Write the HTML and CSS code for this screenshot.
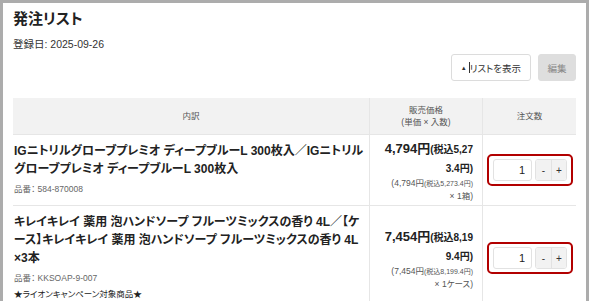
FILE: index.html
```html
<!DOCTYPE html>
<html>
<head>
    <title>発注リスト</title>
    <link rel="stylesheet" href="styles.css">
</head>
<body>
    <div class="frame">
        <h1 class="title">発注リスト</h1>
        <p class="date">登録日: 2025-09-26</p>
        <div class="actions">
            <button class="btn-list"><span class="arrow">▲</span><span class="caret"></span>リストを表示</button>
            <button class="btn-edit">編集</button>
        </div>
        <table class="order-table">
            <thead>
                <tr>
                    <th class="col-item">内訳</th>
                    <th class="col-price">販売価格<br>(単価 × 入数)</th>
                    <th class="col-qty">注文数</th>
                </tr>
            </thead>
            <tbody>
                <tr>
                    <td class="col-item">
                        <div class="item-name">IGニトリルグローブプレミオ ディープブルーL 300枚入／IGニトリルグローブプレミオ ディープブルーL 300枚入</div>
                        <div class="item-code">品番： 584-870008</div>
                    </td>
                    <td class="col-price">
                        <div class="price"><span class="price-main">4,794円</span><span class="price-tax">(税込5,273.4円)</span></div>
                        <div class="price-unit">(4,794円<span class="tiny">(税込5,273.4円)</span> <span class="nowrap">× 1箱)</span></div>
                    </td>
                    <td class="col-qty">
                        <div class="qty-box">
                            <input class="qty-input" type="text" value="1">
                            <div class="qty-buttons">
                                <button class="qty-btn">-</button>
                                <button class="qty-btn">+</button>
                            </div>
                        </div>
                    </td>
                </tr>
                <tr>
                    <td class="col-item">
                        <div class="item-name">キレイキレイ 薬用 泡ハンドソープ フルーツミックスの香り 4L／【ケース】キレイキレイ 薬用 泡ハンドソープ フルーツミックスの香り 4L<wbr>×3本</div>
                        <div class="item-code">品番： KKSOAP-9-007</div>
                        <div class="item-note">★ライオンキャンペーン対象商品★</div>
                    </td>
                    <td class="col-price">
                        <div class="price"><span class="price-main">7,454円</span><span class="price-tax">(税込8,199.4円)</span></div>
                        <div class="price-unit">(7,454円<span class="tiny">(税込8,199.4円)</span> <span class="nowrap">× 1ケース)</span></div>
                    </td>
                    <td class="col-qty">
                        <div class="qty-box">
                            <input class="qty-input" type="text" value="1">
                            <div class="qty-buttons">
                                <button class="qty-btn">-</button>
                                <button class="qty-btn">+</button>
                            </div>
                        </div>
                    </td>
                </tr>
            </tbody>
        </table>
    </div>
</body>
</html>
```

FILE: styles.css
```css
body {
    margin: 0;
    font-family: "Liberation Sans", "Noto Sans CJK JP", sans-serif;
    font-feature-settings: "palt";
    color: #222;
    background-color: #fff;
}
.frame {
    width: 563px;
    height: 294px;
    padding: 4px 10px 0 10px;
    border: 3px solid #acacac;
    border-bottom-width: 2px;
    overflow: hidden;
}
.title {
    margin: 0;
    font-size: 15px;
    line-height: 24px;
    font-weight: bold;
    color: #222;
}
.date {
    margin: 5px 0 0 0;
    font-size: 10.5px;
    line-height: 16px;
    color: #333;
}
.actions {
    display: flex;
    justify-content: flex-end;
    gap: 7px;
    margin-top: 2px;
}
.actions button {
    height: 27px;
    border-radius: 3px;
    font-family: "Liberation Sans", "Noto Sans CJK JP", sans-serif;
    font-feature-settings: "palt";
    font-size: 9.5px;
    cursor: pointer;
}
.btn-list {
    display: flex;
    align-items: center;
    padding: 0 9px;
    background-color: #fff;
    border: 1px solid #dcdcdc;
    color: #333;
}
.btn-list .arrow {
    font-size: 6px;
    margin-right: 2px;
}
.btn-list .caret {
    width: 1px;
    height: 11px;
    background-color: #333;
}
.btn-edit {
    width: 38px;
    padding: 0;
    background-color: #dedede;
    border: 1px solid #dedede;
    color: #888;
}
.order-table {
    width: 563px;
    margin-top: 17px;
    border-collapse: collapse;
    table-layout: fixed;
}
.order-table th {
    height: 36px;
    padding: 0;
    background-color: #f2f2f2;
    font-size: 8.5px;
    font-weight: normal;
    line-height: 12px;
    color: #555;
    border-left: 1px solid #e6e6e6;
    border-bottom: 1px solid #e6e6e6;
}
.order-table th:first-child,
.order-table td:first-child {
    border-left: none;
}
.order-table td {
    border-left: 1px solid #e6e6e6;
    border-bottom: 1px solid #e6e6e6;
    vertical-align: middle;
}
.col-item {
    width: 356px;
}
.col-price {
    width: 112px;
}
.order-table td.col-item {
    padding: 7px 4px 10px 1px;
    vertical-align: top;
}
.item-name {
    font-size: 12px;
    line-height: 18px;
    font-weight: bold;
    color: #222;
}
.item-code {
    margin-top: 5px;
    font-size: 8.5px;
    line-height: 12px;
    color: #666;
}
.item-note {
    margin-top: 4px;
    font-size: 8.5px;
    line-height: 12px;
    color: #222;
}
.order-table td.col-price {
    padding: 0 9px 0 8px;
    text-align: right;
    word-break: break-all;
}
.price {
    font-weight: bold;
    line-height: 17px;
    color: #222;
}
.price-main {
    font-size: 13px;
}
.price-tax {
    font-size: 10px;
}
.price-unit {
    font-size: 8.5px;
    line-height: 12px;
    color: #555;
    word-break: normal;
}
.price-unit .tiny {
    font-size: 7px;
}
.nowrap {
    white-space: nowrap;
}
.order-table td.col-qty {
    padding: 0 3px 0 4px;
}
.qty-box {
    display: flex;
    align-items: center;
    gap: 3px;
    padding: 3px 4px;
    border: 2px solid #b20000;
    border-radius: 5px;
}
.qty-input {
    width: 39px;
    height: 22px;
    padding: 0 6px 0 0;
    border: 1px solid #e2e2e2;
    border-radius: 3px;
    text-align: right;
    font-family: "Liberation Sans", "Noto Sans CJK JP", sans-serif;
    font-size: 11px;
    color: #222;
    box-sizing: border-box;
}
.qty-buttons {
    display: flex;
    border: 1px solid #e2e2e2;
    border-radius: 3px;
    overflow: hidden;
}
.qty-btn {
    width: 17px;
    height: 20px;
    padding: 0;
    background-color: #f2f2f2;
    border: none;
    font-family: "Liberation Sans", sans-serif;
    font-size: 10px;
    color: #333;
}
.qty-btn + .qty-btn {
    border-left: 1px solid #e2e2e2;
}
```
